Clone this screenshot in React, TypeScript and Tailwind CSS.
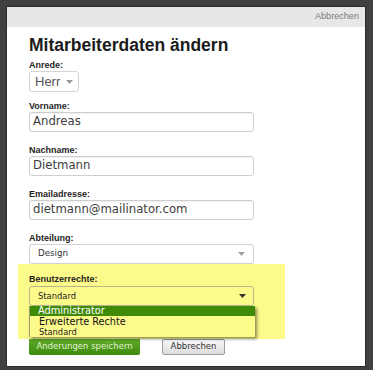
import React from "react";

const label = "block h-[11px] leading-[11px] text-[9px] font-bold text-[#1e1e1e] [font-family:'Liberation_Sans',Arial,sans-serif]";
const inputCls = "h-[20px] w-[225px] rounded-[3px] border border-[#cfcfcf] bg-white pl-[3px] flex items-center text-[11.7px] text-[#3d3d3d] shadow-[inset_0_1px_1px_rgba(0,0,0,0.06)] [font-family:'DejaVu_Sans',Verdana,sans-serif]";

function Caret({ color }: { color: string }) {
  return (
    <svg width="7" height="4" viewBox="0 0 7 4">
      <path d="M0 0 L7 0 L3.5 4 Z" fill={color} />
    </svg>
  );
}

export default function App() {
  return (
    <div className="w-[373px] h-[370px] bg-[#404040] pt-[6px] pl-[6px] overflow-hidden">
      <div className="w-[360px] h-[361px] border border-[#2a2a2a] bg-white flex flex-col">
        <div className="h-[20px] bg-[#e7e7e7] flex items-center justify-end pr-[6px]">
          <span className="text-[9.1px] text-[#7a7a7a] [font-family:'Liberation_Sans',Arial,sans-serif]">Abbrechen</span>
        </div>
        <div className="pl-[22px] flex flex-col">
          <h1 className="mt-[8px] h-[20px] leading-[20px] text-[17.5px] font-bold text-[#1b1b1b] [font-family:'Liberation_Sans',Arial,sans-serif]">
            Mitarbeiterdaten ändern
          </h1>
          <span className={`${label} mt-[5px]`}>Anrede:</span>
          <div className="h-[21px] w-[50px] rounded-[3px] border border-[#d4d4d4] bg-white flex items-center pl-[5px] gap-[6px]">
            <span className="text-[13px] text-[#555] [font-family:'Liberation_Sans',Arial,sans-serif]">Herr</span>
            <Caret color="#9a9a9a" />
          </div>

          <span className={`${label} mt-[9px]`}>Vorname:</span>
          <div className={inputCls}>Andreas</div>

          <span className={`${label} mt-[13px]`}>Nachname:</span>
          <div className={inputCls}>Dietmann</div>

          <span className={`${label} mt-[13px]`}>Emailadresse:</span>
          <div className={inputCls}>dietmann@mailinator.com</div>

          <span className={`${label} mt-[13px]`}>Abteilung:</span>
          <div className="h-[20px] w-[225px] rounded-[3px] border border-[#d0d0d0] bg-white flex items-center justify-between pl-[8px] pr-[8px] shadow-[0_1px_1px_rgba(0,0,0,0.05)]">
            <span className="text-[8.7px] text-[#333] [font-family:'DejaVu_Sans',Verdana,sans-serif]">Design</span>
            <Caret color="#a0a0a0" />
          </div>

          <div className="ml-[-11px] w-[267px] h-[75px] bg-[#fdfa8c] pl-[11px] pt-[10px] relative">
            <span className={label}>Benutzerrechte:</span>
            <div className="mt-[1px] h-[20px] w-[225px] rounded-[3px] border border-[#b9b78a] bg-[#fdfa8c] flex items-center justify-between pl-[8px] pr-[7px]">
              <span className="text-[8.4px] text-[#222] [font-family:'DejaVu_Sans',Verdana,sans-serif]">Standard</span>
              <Caret color="#333" />
            </div>
            <div className="absolute left-[11px] top-[42px] w-[226px] h-[31px] bg-[#fdfa8c] border-l border-[#9a9a70] shadow-[2px_2px_3px_rgba(0,0,0,0.45)] flex flex-col [font-family:'DejaVu_Sans',Verdana,sans-serif]">
              <div className="h-[10px] bg-[#3f8a06] pl-[8px] text-[9.8px] leading-[10px] text-white">Administrator</div>
              <div className="h-[11px] pl-[9px] text-[9.7px] leading-[11px] text-[#111]">Erweiterte Rechte</div>
              <div className="h-[10px] pl-[9px] text-[8.3px] leading-[10px] text-[#222]">Standard</div>
            </div>
          </div>

          <div className="mt-[-2px] flex items-center gap-[22px]">
            <div className="h-[18px] w-[111px] rounded-[2px] bg-gradient-to-b from-[#63ae2c] to-[#3d8a0c] flex items-center justify-center text-[8.5px] text-[#e4f3d4] [font-family:'DejaVu_Sans',Verdana,sans-serif]">
              Anderungen speichern
            </div>
            <div className="mt-[1px] h-[16px] w-[63px] rounded-[2px] border border-[#9c9c9c] bg-gradient-to-b from-[#fafafa] to-[#dcdcdc] flex items-center justify-center text-[8.5px] text-[#333] [font-family:'DejaVu_Sans',Verdana,sans-serif]">
              Abbrechen
            </div>
          </div>
        </div>
      </div>
    </div>
  );
}
